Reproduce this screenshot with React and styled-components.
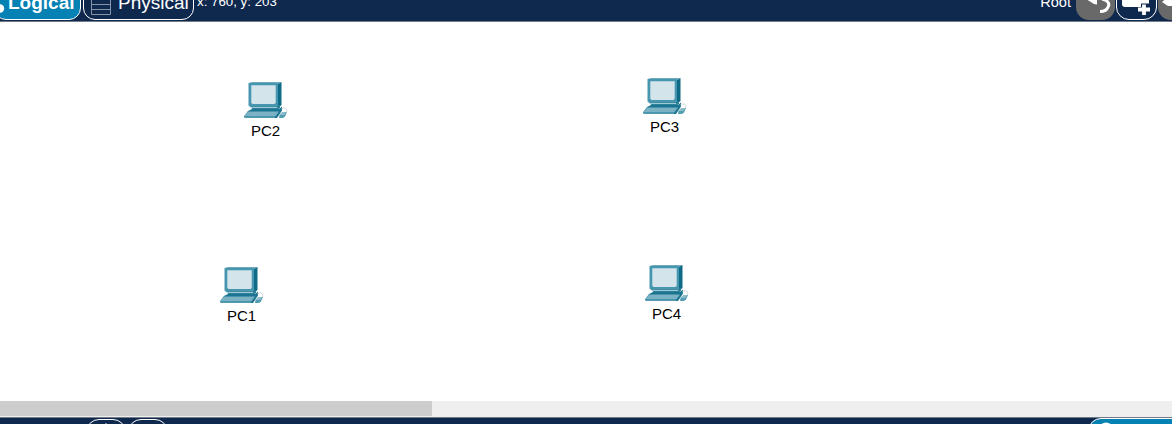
import React from "react";
import styled, { createGlobalStyle } from "styled-components";

const Global = createGlobalStyle`
  * { box-sizing: border-box; }
  body { margin: 0; overflow: hidden; background: #fff; font-family: "Liberation Sans", Arial, sans-serif; }
`;
const Window = styled.div`
  width: 1172px; height: 424px; overflow: hidden;
  display: flex; flex-direction: column;
`;
const Toolbar = styled.header`
  height: 22px; flex: none; overflow: hidden;
  display: flex; align-items: flex-end; justify-content: space-between;
  background: #0f284d; border-bottom: 1px solid #737b89;
`;
const Group = styled.div`
  display: flex; align-items: flex-end; height: 40px; flex: none;
`;
const Tab = styled.button`
  height: 34px; width: ${p => p.$width}px; margin: 0 2px 1px ${p => p.$offset || 0}px;
  padding: 0 0 0 ${p => (p.$active ? 5 : 7)}px; display: flex; align-items: flex-start; flex: none;
  border: 1px solid #fff; border-radius: 12px; color: #fff;
  background: ${p => (p.$active ? "#0681b3" : "#0f284d")};
  font: ${p => (p.$active ? "bold" : "normal")} 19px/22px "Liberation Sans", Arial, sans-serif;
  svg { flex: none; }
`;
const TabLabel = styled.span`
  margin: 5px 0 0 ${p => p.$gap}px;
`;
const Coordinates = styled.span`
  color: #fff; font-size: 13.3px; line-height: 16px; padding-bottom: 11px; margin-left: 1px; white-space: pre;
`;
const Root = styled.span`
  color: #fff; font-size: 14.6px; line-height: 16px; padding-bottom: 11px; margin-right: 5px;
`;
const Tool = styled.button`
  flex: none; width: ${p => p.$width || 39}px; height: 34px; margin: 0 1px 1px 0; padding: 0;
  display: flex; align-items: flex-end; overflow: hidden;
  border: ${p => (p.$outlined ? "1px solid #fff" : "0")};
  border-radius: ${p => (p.$cut ? "13px 0 0 13px" : "13px")};
  background: ${p => (p.$outlined ? "#0f284d" : "#696969")};
  &:last-child { margin-right: 0; }
`;
const Canvas = styled.main`
  position: relative; height: 379px; flex: none; background: #fff;
`;
const Device = styled.figure`
  position: absolute; left: ${p => p.$x}px; top: ${p => p.$y}px;
  width: 44px; margin: 0; display: flex; flex-direction: column; align-items: center;
  svg { display: block; }
`;
const Name = styled.figcaption`
  color: #000; font-size: 15px; line-height: 18px; margin: 3px 1px 0 0;
`;
const ScrollTrack = styled.div`
  height: 15px; flex: none; background: #efefef;
`;
const ScrollThumb = styled.div`
  width: 432px; height: 15px; background: #cdcdcd;
`;
const Footer = styled.footer`
  height: 8px; flex: none; overflow: hidden; display: flex; align-items: flex-start;
  border-top: 1px solid #efefef; box-shadow: inset 0 1px #737b89; background: #0f284d;
`;
const FooterTools = styled.div`
  display: flex; gap: 2px; padding: 2px 0 0 86px; flex: 1;
`;
const FooterButton = styled.button`
  width: 40px; height: 34px; padding: 0; border: 1px solid #fff; border-radius: 13px;
  background: #0f284d; display: flex; justify-content: center; flex: none;
  svg { margin-top: 2px; }
`;
const Realtime = styled.button`
  width: 102px; height: 34px; margin: 1px -18px 0 0; padding: 3px 0 0 9px;
  border: 1px solid #fff; border-radius: 13px; background: #0681b3;
  display: flex; align-items: flex-start; flex: none;
`;

function Computer() {
  return (
    <svg width="44" height="38" viewBox="0 0 44 38">
      <path d="M4.5 2 8 1H37.5L34 3Z" fill="#6fa9bc" />
      <path d="M34 3 37.5 1V24L34 27Z" fill="#0f6b85" />
      <path d="M4.5 2H34V25.5H6Q4.5 25.5 4.5 24Z" fill="#4796af" />
      <path d="M7.3 4.3H31.7V21.7L30.5 23H8.5L7.3 21.7Z" fill="#d3e4eb" />
      <path d="M6 25H33L36 24V27L33 29H9Z" fill="#2c8099" />
      <path d="M6.5 26.4H33" stroke="#a0c9d5" strokeWidth="1.2" />
      <path d="M4 30 8 28H35L38 25.5V29.5L33 37H1L0 35.5Z" fill="#1c7590" />
      <path d="M4 30.5H35L31.5 35.3H0Z" fill="#77afc2" />
      <path d="M0 35.3H31.5L30.8 37H1Z" fill="#529bb0" />
      <path d="M6 32H32M3 34H30" stroke="#8bbdcb" strokeWidth=".6" />
      <path d="M37 28C40 26 44 27 42.5 31" fill="none" stroke="#b7c5ca" strokeWidth=".7" />
      <path d="M35.5 34 38.5 31H43L41 35.5 39 37H35Z" fill="#559db2" />
      <path d="M36 33.5 38.5 31H42.5L40 34H36Z" fill="#8bbdcb" />
    </svg>
  );
}

const devices = [
  ["PC2", 244, 59], ["PC3", 643, 55], ["PC1", 220, 244], ["PC4", 645, 242],
];

export default function App() {
  return (
    <Window>
      <Global />
      <Toolbar>
        <Group>
          <Tab $active $width={87} $offset={-6}>
            <svg width="6" height="29"><circle cx="0" cy="21.5" r="4.2" fill="#fff" /></svg>
            <TabLabel $gap={2}>Logical</TabLabel>
          </Tab>
          <Tab $width={111}>
            <svg width="20" height="29"><path d="M.5 9V27.5H19.5V9M.5 17.5H19.5M.5 22.5H19.5" fill="none" stroke="#8793a6" /></svg>
            <TabLabel $gap={7}>Physical</TabLabel>
          </Tab>
          <Coordinates>x: 760, y: 203</Coordinates>
        </Group>
        <Group>
          <Root>Root</Root>
          <Tool>
            <svg width="39" height="20"><path d="M10-1H21L21 4.5 18 4Z" fill="#fff" /><path d="M26-1C32 0 34 4 32 7 31 10 28 11.5 24 11.5" fill="none" stroke="#fff" strokeWidth="3" /></svg>
          </Tool>
          <Tool $outlined $width={41}>
            <svg width="39" height="19"><path d="M5 0H32V3.5H24V7H8Q5 7 5 4Z" fill="#fff" /><path d="M27 4.5V15M21 9.5H33" stroke="#fff" strokeWidth="3.8" /></svg>
          </Tool>
          <Tool $cut $width={14}>
            <svg width="14" height="20"><path d="M4 2 10-3H14V6H10Z" fill="#fff" /></svg>
          </Tool>
        </Group>
      </Toolbar>
      <Canvas>
        {devices.map(([name, x, y]) => (
          <Device key={name} $x={x} $y={y}><Computer /><Name>{name}</Name></Device>
        ))}
      </Canvas>
      <ScrollTrack><ScrollThumb /></ScrollTrack>
      <Footer>
        <FooterTools>
          <FooterButton><svg width="12" height="8"><path d="M0 8 6 1 12 8Z" fill="#fff" /></svg></FooterButton>
          <FooterButton />
        </FooterTools>
        <Realtime><svg width="16" height="16"><circle cx="8" cy="8" r="7.5" fill="#fff" /></svg></Realtime>
      </Footer>
    </Window>
  );
}
